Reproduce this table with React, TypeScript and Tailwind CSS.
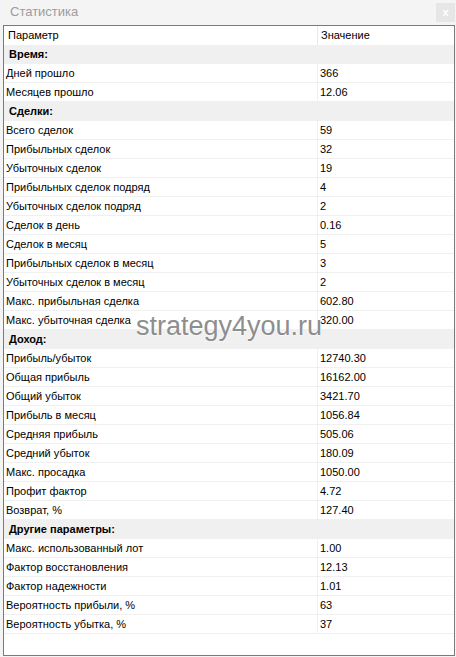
import React from "react";

type Row = { g?: string; p?: string; v?: string };

const rows: Row[] = [
  { g: "Время:" },
  { p: "Дней прошло", v: "366" },
  { p: "Месяцев прошло", v: "12.06" },
  { g: "Сделки:" },
  { p: "Всего сделок", v: "59" },
  { p: "Прибыльных сделок", v: "32" },
  { p: "Убыточных сделок", v: "19" },
  { p: "Прибыльных сделок подряд", v: "4" },
  { p: "Убыточных сделок подряд", v: "2" },
  { p: "Сделок в день", v: "0.16" },
  { p: "Сделок в месяц", v: "5" },
  { p: "Прибыльных сделок в месяц", v: "3" },
  { p: "Убыточных сделок в месяц", v: "2" },
  { p: "Макс. прибыльная сделка", v: "602.80" },
  { p: "Макс. убыточная сделка", v: "320.00" },
  { g: "Доход:" },
  { p: "Прибыль/убыток", v: "12740.30" },
  { p: "Общая прибыль", v: "16162.00" },
  { p: "Общий убыток", v: "3421.70" },
  { p: "Прибыль в месяц", v: "1056.84" },
  { p: "Средняя прибыль", v: "505.06" },
  { p: "Средний убыток", v: "180.09" },
  { p: "Макс. просадка", v: "1050.00" },
  { p: "Профит фактор", v: "4.72" },
  { p: "Возврат, %", v: "127.40" },
  { g: "Другие параметры:" },
  { p: "Макс. использованный лот", v: "1.00" },
  { p: "Фактор восстановления", v: "12.13" },
  { p: "Фактор надежности", v: "1.01" },
  { p: "Вероятность прибыли, %", v: "63" },
  { p: "Вероятность убытка, %", v: "37" },
];

export default function App() {
  return (
    <div
      className="w-[456px] h-[657px] bg-[#f4f4f4] flex flex-col overflow-hidden relative"
      style={{ fontFamily: '"Liberation Sans", Arial, sans-serif' }}
    >
      <div className="h-[25px] flex items-start justify-between shrink-0">
        <div className="pl-[10px] pt-[4px] text-[13px] text-[#9c9c9c] leading-[16px]">Статистика</div>
        <div className="mt-[3px] mr-[1px] w-[19px] h-[19px] bg-[#e6e6e6] flex items-center justify-center text-white text-[11px] font-bold leading-none">
          x
        </div>
      </div>
      <div className="ml-[3px] mr-[1px] h-[631px] border border-[#7a7a7a] bg-white flex flex-col text-[11px] text-black leading-[19px]">
        <div className="h-[19px] flex shrink-0">
          <div className="w-[314px] pl-[4px] border-r border-[#e8e8e8]">Параметр</div>
          <div className="pl-[3px] flex-1">Значение</div>
        </div>
        {rows.map((r, i) =>
          r.g ? (
            <div key={i} className="h-[19px] bg-[#f0f0f0] pl-[5px] font-bold shrink-0">
              {r.g}
            </div>
          ) : (
            <div key={i} className="h-[19px] flex border-b border-[#f0f0f0] shrink-0">
              <div className="w-[314px] pl-[2px] border-r border-[#f0f0f0] leading-[18px]">{r.p}</div>
              <div className="pl-[2px] flex-1 leading-[18px]">{r.v}</div>
            </div>
          )
        )}
      </div>
      <div
        className="absolute left-[136px] top-[313px] text-[27px] text-[#8e8e8e] leading-none"
        style={{ textShadow: "0 0 2px #fff, 0 0 2px #fff" }}
      >
        strategy4you.ru
      </div>
    </div>
  );
}
